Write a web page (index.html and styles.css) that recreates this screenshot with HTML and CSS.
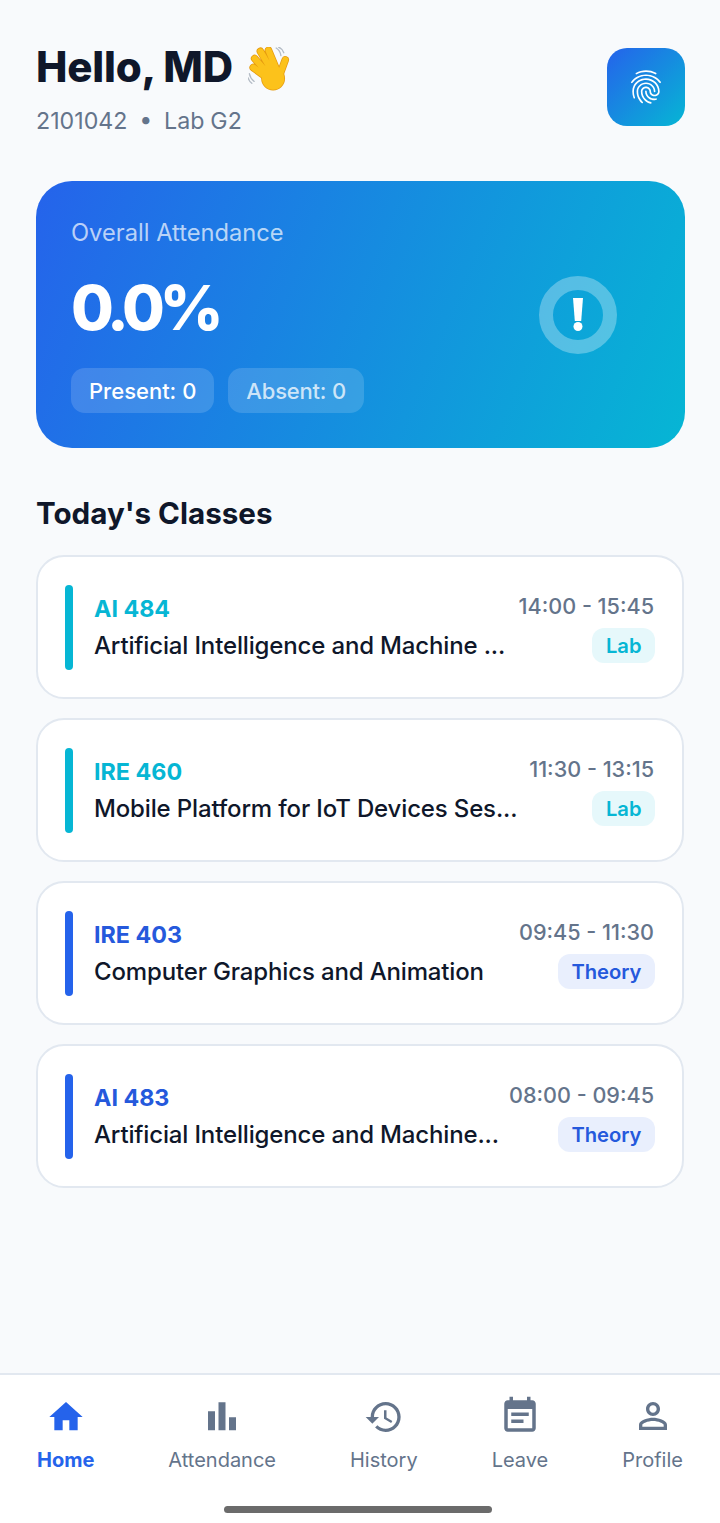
FILE: index.html
```html
<!DOCTYPE html>
<html lang="en">
<head>
    <meta charset="UTF-8">
    <meta name="viewport" content="width=device-width, initial-scale=1.0">
    <title>Attendance</title>
    <link rel="stylesheet" href="styles.css">
</head>
<body>
    <main class="content">
        <header class="top-bar">
            <div>
                <h1 class="greeting">Hello, MD
                    <svg class="wave" viewBox="0 0 44 46">
                        <g fill="none" stroke="#b4bcc6" stroke-width="1.4" stroke-linecap="round">
                            <path d="M29.5 1c2.5 1.5 4.5 4.5 5 8"/>
                            <path d="M32 0c2.500 1 4.500 3 5.500 6"/>
                            <path d="M1.500 28c.5 3 2.500 6 5 8"/>
                            <path d="M0 32c.8 2.500 2 4.500 4 6"/>
                        </g>
                        <g fill="none" stroke="#e59a10" stroke-width="8" stroke-linecap="round">
                            <path d="M5.500 21.500 21 33M7 12l14 16M13 4.500 25 25M21.500 3.500 29.700 23.300M39 13.500 33 30"/>
                        </g>
                        <circle cx="26.300" cy="33" r="12.500" fill="#e59a10"/>
                        <g fill="none" stroke="#fcc21b" stroke-width="6.400" stroke-linecap="round">
                            <path d="M5.500 21.500 21 33M7 12l14 16M13 4.500 25 25M21.500 3.500 29.700 23.300M39 13.500 33 30"/>
                        </g>
                        <circle cx="26.300" cy="33" r="11.700" fill="#fcc21b"/>
                    </svg>
                </h1>
                <p class="student-meta">2101042 &nbsp;•&nbsp; Lab G2</p>
            </div>
            <div class="scan-btn">
                <svg viewBox="0 0 24 24" width="40" height="40" fill="#fff"><path d="M17.810 4.470c-.08 0-.16-.02-.23-.06C15.660 3.420 14 3 12.010 3c-1.980 0-3.860.47-5.570 1.410-.24.13-.54.04-.68-.2-.13-.24-.04-.55.2-.68C7.820 2.520 9.860 2 12.010 2c2.130 0 3.990.47 6.030 1.520.25.13.34.43.21.67-.09.18-.26.28-.44.28zM3.500 9.720c-.1 0-.2-.03-.29-.09-.23-.16-.28-.47-.12-.7.99-1.400 2.250-2.500 3.750-3.270C9.980 4.040 14 4.030 17.150 5.650c1.500.77 2.760 1.860 3.750 3.250.16.22.11.54-.12.7-.23.16-.54.11-.7-.12-.9-1.260-2.040-2.250-3.390-2.940-2.870-1.470-6.540-1.470-9.400.01-1.360.7-2.500 1.700-3.400 2.960-.08.14-.23.21-.39.21zm6.250 12.070c-.13 0-.26-.05-.35-.15-.87-.87-1.340-1.430-2.010-2.640-.69-1.230-1.050-2.730-1.050-4.340 0-2.970 2.540-5.390 5.660-5.390s5.660 2.420 5.660 5.390c0 .28-.22.5-.5.5s-.5-.22-.5-.5c0-2.420-2.090-4.390-4.660-4.390-2.570 0-4.660 1.970-4.660 4.390 0 1.440.32 2.770.93 3.850.64 1.150 1.080 1.640 1.850 2.420.19.2.19.51 0 .71-.11.1-.24.15-.37.15zm7.170-1.850c-1.190 0-2.240-.3-3.100-.89-1.490-1.010-2.380-2.650-2.380-4.390 0-.28.22-.5.5-.5s.5.22.5.5c0 1.410.72 2.740 1.940 3.560.71.48 1.540.71 2.540.71.24 0 .64-.03 1.040-.1.27-.05.53.13.58.41.05.27-.13.53-.41.58-.57.11-1.070.12-1.210.12zM14.910 22c-.04 0-.09-.01-.13-.02-1.590-.44-2.630-1.030-3.720-2.100-1.400-1.390-2.170-3.240-2.170-5.220 0-1.620 1.380-2.940 3.080-2.940 1.700 0 3.080 1.320 3.080 2.940 0 1.070.93 1.940 2.080 1.940s2.080-.87 2.080-1.940c0-3.770-3.250-6.830-7.250-6.830-2.840 0-5.440 1.580-6.610 4.030-.39.81-.59 1.760-.59 2.800 0 .78.07 2.010.67 3.610.1.26-.03.55-.29.64-.26.1-.55-.04-.64-.29-.49-1.310-.73-2.610-.73-3.960 0-1.200.23-2.290.68-3.240 1.330-2.790 4.280-4.600 7.510-4.600 4.550 0 8.250 3.510 8.250 7.830 0 1.620-1.380 2.940-3.080 2.940s-3.080-1.320-3.080-2.940c0-1.070-.93-1.940-2.080-1.940s-2.080.87-2.080 1.940c0 1.710.66 3.310 1.870 4.510.95.94 1.860 1.460 3.270 1.850.27.07.42.35.35.61-.05.23-.26.38-.47.38z"/></svg>
            </div>
        </header>

        <section class="summary-card">
            <div>
                <p class="summary-label">Overall Attendance</p>
                <p class="summary-value">0.0%</p>
                <div class="summary-chips">
                    <span class="chip">Present: 0</span>
                    <span class="chip chip-muted">Absent: 0</span>
                </div>
            </div>
            <svg class="summary-icon" viewBox="0 0 78 78" width="78" height="78">
                <circle cx="39" cy="39" r="32" fill="none" stroke="#fff" stroke-opacity="0.3" stroke-width="14"/>
                <path d="M34 22h10l-1.800 23h-6.400z" fill="#fff"/>
                <circle cx="39" cy="50.500" r="4.500" fill="#fff"/>
            </svg>
        </section>

        <h2 class="section-title">Today's Classes</h2>

        <div class="class-list">
            <article class="class-card">
                <span class="class-bar lab"></span>
                <div class="class-info">
                    <div class="class-code lab">AI 484</div>
                    <div class="class-name">Artificial Intelligence and Machine ...</div>
                </div>
                <div class="class-side">
                    <span class="class-time">14:00 - 15:45</span>
                    <span class="class-tag lab">Lab</span>
                </div>
            </article>
            <article class="class-card">
                <span class="class-bar lab"></span>
                <div class="class-info">
                    <div class="class-code lab">IRE 460</div>
                    <div class="class-name">Mobile Platform for IoT Devices Ses...</div>
                </div>
                <div class="class-side">
                    <span class="class-time">11:30 - 13:15</span>
                    <span class="class-tag lab">Lab</span>
                </div>
            </article>
            <article class="class-card">
                <span class="class-bar theory"></span>
                <div class="class-info">
                    <div class="class-code theory">IRE 403</div>
                    <div class="class-name">Computer Graphics and Animation</div>
                </div>
                <div class="class-side">
                    <span class="class-time">09:45 - 11:30</span>
                    <span class="class-tag theory">Theory</span>
                </div>
            </article>
            <article class="class-card">
                <span class="class-bar theory"></span>
                <div class="class-info">
                    <div class="class-code theory">AI 483</div>
                    <div class="class-name">Artificial Intelligence and Machine...</div>
                </div>
                <div class="class-side">
                    <span class="class-time">08:00 - 09:45</span>
                    <span class="class-tag theory">Theory</span>
                </div>
            </article>
        </div>
    </main>

    <footer class="bottom-nav">
        <nav class="nav-items">
            <a class="nav-item active">
                <svg viewBox="0 0 24 24" width="40" height="40" fill="currentColor"><path d="M10 20v-6h4v6h5v-8h3L12 3 2 12h3v8z"/></svg>
                Home
            </a>
            <a class="nav-item">
                <svg viewBox="0 0 40 40" width="40" height="40" fill="currentColor"><path d="M6 14.300h7v19H6zM16.500 5.300h7v28h-7zM27 20.300h7v13h-7z"/></svg>
                Attendance
            </a>
            <a class="nav-item">
                <svg viewBox="0 0 24 24" width="40" height="40" fill="currentColor"><path d="M13 3c-4.970 0-9 4.030-9 9H1l3.890 3.890.07.14L9 12H6c0-3.870 3.130-7 7-7s7 3.130 7 7-3.130 7-7 7c-1.930 0-3.680-.79-4.940-2.060l-1.420 1.420C8.270 19.990 10.510 21 13 21c4.970 0 9-4.030 9-9s-4.030-9-9-9zm-1 5v5l4.280 2.540.72-1.210-3.500-2.080V8H12z"/></svg>
                History
            </a>
            <a class="nav-item">
                <svg viewBox="0 0 24 24" width="42" height="42" fill="currentColor"><path d="M17 10H7v2h10v-2zm2-7h-1V1h-2v2H8V1H6v2H5c-1.110 0-1.990.9-1.990 2L3 19c0 1.100.89 2 2 2h14c1.100 0 2-.9 2-2V5c0-1.100-.9-2-2-2zm0 16H5V8h14v11zm-5-5H7v2h7v-2z"/></svg>
                Leave
            </a>
            <a class="nav-item">
                <svg viewBox="0 0 24 24" width="42" height="42" fill="currentColor"><path d="M12 5.900c1.160 0 2.100.94 2.100 2.100s-.94 2.100-2.100 2.100S9.900 9.160 9.900 8s.94-2.100 2.100-2.100m0 9c2.970 0 6.100 1.460 6.100 2.100v1.100H5.900V17c0-.64 3.130-2.100 6.100-2.100M12 4C9.790 4 8 5.790 8 8s1.790 4 4 4 4-1.790 4-4-1.790-4-4-4zm0 9c-2.670 0-8 1.340-8 4v3h16v-3c0-2.660-5.330-4-8-4z"/></svg>
                Profile
            </a>
        </nav>
        <div class="home-indicator"></div>
    </footer>
</body>
</html>
```

FILE: styles.css
```css
* {
    box-sizing: border-box;
}
body {
    font-family: Inter, "Noto Sans", sans-serif;
    margin: 0;
    height: 1523px;
    display: flex;
    flex-direction: column;
    background-color: #f8fafc;
    color: #0f172a;
}
.content {
    flex: 1;
    padding: 48px 35px 0 36px;
}
.top-bar {
    display: flex;
    justify-content: space-between;
    align-items: flex-start;
}
.greeting {
    margin: -7px 0 0;
    font-size: 42px;
    line-height: 52px;
    font-weight: 800;
    letter-spacing: -0.2px;
    display: flex;
    align-items: center;
    gap: 15px;
}
.wave {
    width: 42px;
    height: 44px;
    margin-top: 3px;
}
.student-meta {
    margin: 13px 0 0;
    font-size: 23.200px;
    line-height: 30px;
    word-spacing: -0.6px;
    color: #64748b;
}
.scan-btn {
    width: 78px;
    height: 78px;
    border-radius: 20px;
    background: linear-gradient(135deg, #2563eb, #06b6d4);
    display: flex;
    align-items: center;
    justify-content: center;
}
.summary-card {
    margin-top: 45px;
    height: 267px;
    padding: 36px 68px 35px 35px;
    border-radius: 36px;
    background: linear-gradient(112.400deg, #2563eb, #06b6d4);
    display: flex;
    justify-content: space-between;
    align-items: center;
    color: #fff;
}
.summary-label {
    margin: 0;
    font-size: 23.700px;
    line-height: 32px;
    color: rgba(255, 255, 255, 0.7);
}
.summary-value {
    margin: 20px 0 0;
    font-size: 62px;
    line-height: 78px;
    font-weight: 800;
    letter-spacing: -5px;
}
.summary-chips {
    display: flex;
    gap: 14px;
    margin-top: 21px;
}
.chip {
    height: 45px;
    padding: 0 18px;
    border-radius: 14px;
    background-color: rgba(255, 255, 255, 0.15);
    font-size: 22px;
    font-weight: 500;
    line-height: 47px;
}
.chip-muted {
    letter-spacing: -0.2px;
    color: rgba(255, 255, 255, 0.75);
}
.section-title {
    margin: 46px 0 0;
    font-size: 29.600px;
    line-height: 38px;
    font-weight: 700;
}
.class-list {
    display: flex;
    flex-direction: column;
    gap: 19px;
    margin: 23px 1px 0 0;
}
.class-card {
    height: 144px;
    padding: 0 28px 0 27px;
    border: 2px solid #e2e8f0;
    border-radius: 28px;
    background-color: #fff;
    display: flex;
    align-items: center;
}
.class-bar {
    width: 8px;
    height: 85px;
    border-radius: 4px;
    flex-shrink: 0;
}
.class-bar.lab {
    background-color: #06b6d4;
}
.class-bar.theory {
    background-color: #2563eb;
}
.class-info {
    flex: 1;
    min-width: 0;
    margin: 0 6px 0 21px;
    padding-top: 1px;
}
.class-code {
    font-size: 23.300px;
    line-height: 30px;
    font-weight: 700;
}
.class-code.lab {
    color: #06b6d4;
}
.class-code.theory {
    color: #2559dc;
}
.class-name {
    margin-top: 7px;
    font-size: 24px;
    line-height: 30px;
    font-weight: 500;
    letter-spacing: -0.15px;
    white-space: nowrap;
}
.class-side {
    display: flex;
    flex-direction: column;
    align-items: flex-end;
    flex-shrink: 0;
    gap: 8px;
}
.class-time {
    font-size: 21.600px;
    line-height: 28px;
    font-weight: 500;
    color: #64748b;
}
.class-tag {
    height: 35px;
    margin-right: -1px;
    padding: 0 13.500px;
    border-radius: 12px;
    font-size: 20.200px;
    line-height: 35px;
    font-weight: 600;
}
.class-tag.lab {
    color: #06b6d4;
    background-color: rgba(6, 182, 212, 0.1);
}
.class-tag.theory {
    color: #2559dc;
    background-color: rgba(37, 99, 235, 0.1);
}
.bottom-nav {
    height: 150px;
    border-top: 2px solid #e2e8f0;
    background-color: #fff;
    display: flex;
    flex-direction: column;
}
.nav-items {
    display: flex;
    justify-content: space-between;
    padding: 0 37px;
    height: 131px;
}
.nav-item {
    display: flex;
    flex-direction: column;
    align-items: center;
    justify-content: flex-end;
    padding-bottom: 33px;
    font-size: 20px;
    line-height: 26px;
    color: #64748b;
}
.nav-item svg {
    margin-bottom: 10px;
}
.nav-item.active {
    color: #2563eb;
    font-weight: 700;
}
.home-indicator {
    width: 268px;
    height: 7px;
    border-radius: 4px;
    background-color: #6b6b6b;
    margin-left: 224px;
}
```
